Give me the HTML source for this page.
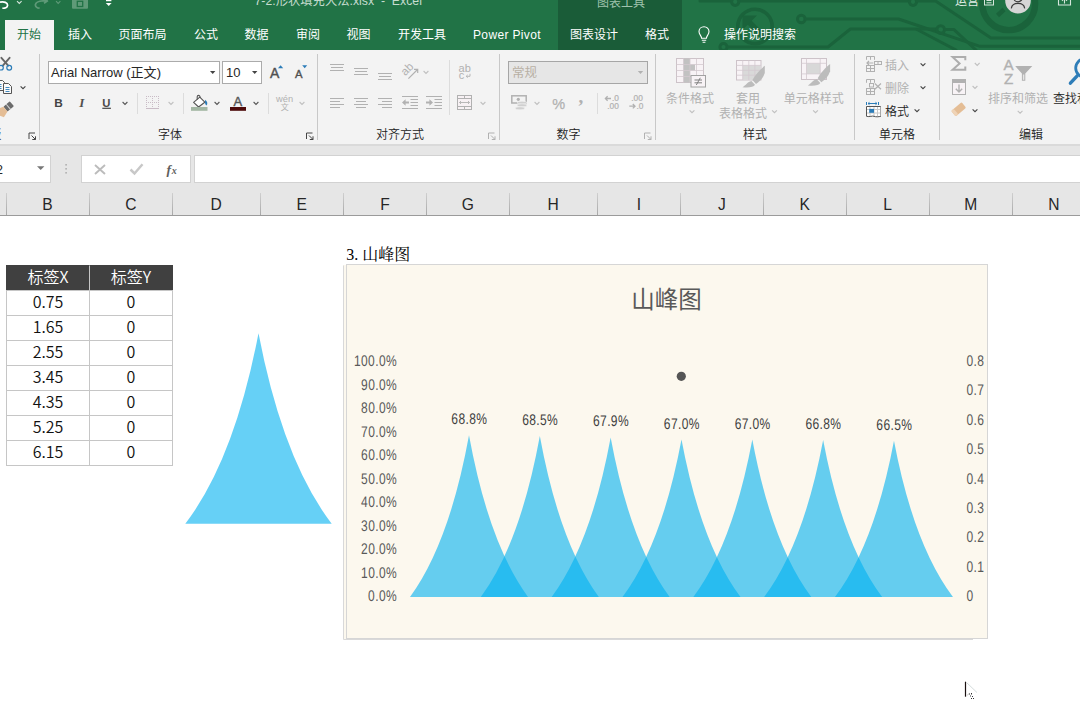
<!DOCTYPE html>
<html lang="zh-CN">
<head>
<meta charset="utf-8">
<title>7-2.形状填充大法.xlsx - Excel</title>
<style>
*{box-sizing:border-box;margin:0;padding:0}
html,body{width:1080px;height:720px;overflow:hidden;background:#fff}
body{font-family:"Liberation Sans","Noto Sans CJK SC",sans-serif;position:relative;color:#262626}
.abs{position:absolute}
/* ---------- title + tabs ---------- */
#titlebar{position:absolute;left:0;top:0;width:1080px;height:50px;background:#217346;overflow:hidden}
#ctxtab{position:absolute;left:558px;top:0;width:124px;height:50px;background:#1a5c38}
.tab{position:absolute;top:25.6px;height:18px;line-height:18px;font-size:12px;color:#fff;white-space:nowrap;letter-spacing:0}
#tab-home{position:absolute;left:5px;top:20px;width:49px;height:30px;background:#f3f3f3}
#tab-home span{position:absolute;left:-0.5px;width:49px;text-align:center;top:5.6px;line-height:18px;font-size:12px;color:#217346}
.ttl{position:absolute;top:-7.7px;font-size:12.3px;color:#c6dccf;white-space:nowrap;line-height:18px}
/* ---------- ribbon ---------- */
#ribbon{position:absolute;left:0;top:50px;width:1080px;height:94px;background:#f3f3f3}
#ribbon-b{position:absolute;left:0;top:144px;width:1080px;height:2px;background:#dadada}
#below{position:absolute;left:0;top:146px;width:1080px;height:70px;background:#e6e6e6}
.vsep{position:absolute;top:54px;width:1px;height:86px;background:#c6c6c6}
.ssep{position:absolute;width:1px;background:#d4d4d4}
.glabel{position:absolute;top:125px;font-size:12px;line-height:16px;color:#262626;white-space:nowrap;transform:translateX(-50%)}
.box{position:absolute;background:#fff;border:1px solid #ababab}
.rtxt{position:absolute;font-size:12px;line-height:16px;white-space:nowrap;color:#262626}
.dis{color:#b1b1b1}
/* ---------- formula bar ---------- */
.fbox{position:absolute;height:28px;background:#fff;border:1px solid #d2d2d2}
/* ---------- grid ---------- */
#colhdr{position:absolute;left:0;top:192px;width:1080px;height:24px;background:#e6e6e6;border-bottom:1px solid #9b9b9b}
.ch{position:absolute;top:3.5px;font-size:15.6px;line-height:18px;color:#262626;transform:translateX(-50%)}
.cs{position:absolute;top:1px;width:1px;height:22px;background:linear-gradient(#cfcfcf,#a8a8a8)}
#sheet{position:absolute;left:0;top:216px;width:1080px;height:504px;background:#fff}
/* ---------- table ---------- */
#tbl{position:absolute;left:6px;top:265px;width:167px;height:201px;border-collapse:collapse;font-size:14px}
.cell{position:absolute;height:26px;border:1px solid #c6c6c6;background:#fff;text-align:center;font-family:"Noto Sans CJK SC","Liberation Sans",sans-serif;font-size:16px;line-height:20px;color:#111;font-weight:350}
.cell.h{background:#404040;color:#fff;border-color:#404040;font-size:16px;line-height:20px}
.cell.h.second{border-left-color:#c6c6c6}
</style>
</head>
<body>
<div id="titlebar">
 <svg class="abs" style="left:0;top:0" width="1080" height="50" viewBox="0 0 1080 50">
  <!-- decorative circuit pattern -->
  <g fill="none" stroke="#1a633b" stroke-width="3" stroke-linecap="round" stroke-linejoin="round">
   <path d="M700 1 H731.5 M739 1 H909.5"/>
   <circle cx="735.2" cy="1.8" r="3.6"/>
   <circle cx="755" cy="26.4" r="17.2" stroke-width="3.6"/>
   <path d="M765 38 L746.5 19.5" stroke-width="5.5" stroke-linecap="butt"/>
   <path d="M742.5 15.5 H757 L742.5 30 Z" fill="#1a633b" stroke="none"/>
   <circle cx="801.3" cy="19" r="3.8"/>
   <path d="M805.3 19 H898.5 L980 46.3 H1080"/>
   <circle cx="723.5" cy="47" r="3.6"/>
   <path d="M727.3 47 H828 L850.4 29 H936.7"/>
   <circle cx="940.7" cy="29.6" r="3.8"/>
   <path d="M944.7 29.6 H954 L976 50"/>
   <path d="M917 29.5 L956 50"/>
   <circle cx="913" cy="1.8" r="3.6"/>
   <path d="M916.7 1 H935.6 L991 38 H1080"/>
   <circle cx="1008.7" cy="3.7" r="26.4" stroke-width="6.4"/>
   <path d="M1004 9.5 L997.5 15.5" stroke-width="4.5" stroke-linecap="butt"/>
  </g>
 </svg>
 <div id="ctxtab"></div>
 <!-- quick access toolbar (cropped) -->
 <svg class="abs" style="left:0;top:0" width="130" height="16" viewBox="0 0 130 16">
  <path d="M0 2.2 C4 1.2 7.6 2.6 7.6 5.2 C7.6 7.6 4.6 8.4 2.4 8.2" fill="none" stroke="#fff" stroke-width="1.7"/>
  <path d="M17 1.2 L19.3 3.4 L21.6 1.2" fill="none" stroke="#d8e6dd" stroke-width="1.1"/>
  <path d="M47.5 0.8 C42 0.6 36 1.2 35.4 4.6 C35.2 6.6 37 8 39.6 8.2 M44 3.2 L48 0.6" fill="none" stroke="#5f9a78" stroke-width="1.7"/>
  <path d="M56 1.2 L58.2 3.4 L60.4 1.2" fill="none" stroke="#5f9a78" stroke-width="1.1"/>
  <rect x="72" y="-2" width="16" height="10.8" rx="1" fill="#5f9a78"/>
  <rect x="77.3" y="1.3" width="5.4" height="5.2" fill="none" stroke="#217346" stroke-width="1.3"/>
  <rect x="106" y="-1" width="5.4" height="2.2" fill="#fff"/>
  <path d="M105.8 3 L111.6 3 L108.7 6 Z" fill="#fff"/>
 </svg>
 <div class="ttl" style="left:254.5px;letter-spacing:0">7-2.形状填充大法.xlsx&nbsp; -&nbsp; Excel</div>
 <div class="ttl" style="left:597px;color:#9fc3ad;font-size:12px;top:-6.5px">图表工具</div>
 <div class="ttl" style="left:955px;font-size:12px;top:-7.6px;color:#e2eee7">运营</div>
 <svg class="abs" style="left:980px;top:0" width="100" height="20" viewBox="980 0 100 20">
  <rect x="984.5" y="-3" width="9" height="8" fill="none" stroke="#d6e6dc" stroke-width="1"/>
  <path d="M986.5 0.5 H991.5 M986.5 2.8 H991.5" stroke="#d6e6dc" stroke-width="1"/>
  <circle cx="1018" cy=".8" r="12.8" fill="#d6d6d6"/>
  <circle cx="1018" cy="-2.6" r="4.4" fill="none" stroke="#3b3b3b" stroke-width="1.2"/>
  <path d="M1011.3 8.4 C1011.8 5 1014.5 3.4 1018 3.4 C1021.5 3.4 1024.2 5 1024.7 8.4" fill="none" stroke="#3b3b3b" stroke-width="1.2"/>
  <path d="M1058.5 -2 V5 H1070.5 V-2" fill="none" stroke="#d6e6dc" stroke-width="1.1"/>
  <path d="M1064.5 3.5 V-2 M1062 0.8 L1064.5 -1.7 L1067 0.8" fill="none" stroke="#d6e6dc" stroke-width="1.1"/>
 </svg>
 <div id="tab-home"><span>开始</span></div>
 <div class="tab" style="left:68px">插入</div>
 <div class="tab" style="left:118.5px">页面布局</div>
 <div class="tab" style="left:194px">公式</div>
 <div class="tab" style="left:244.5px">数据</div>
 <div class="tab" style="left:296px">审阅</div>
 <div class="tab" style="left:346.5px">视图</div>
 <div class="tab" style="left:398px">开发工具</div>
 <div class="tab" style="left:473px;letter-spacing:.35px">Power Pivot</div>
 <div class="tab" style="left:570px">图表设计</div>
 <div class="tab" style="left:645px">格式</div>
 <div class="tab" style="left:724px">操作说明搜索</div>
 <svg class="abs" style="left:696px;top:25px" width="16" height="20" viewBox="0 0 16 20">
  <path d="M5.6 13.2 C5.6 10.8 3 9.8 3 6.6 C3 3.8 5.2 1.8 8 1.8 C10.8 1.8 13 3.8 13 6.6 C13 9.8 10.4 10.8 10.4 13.2 Z" fill="none" stroke="#fff" stroke-width="1.1"/>
  <path d="M5.8 15.3 H10.2 M6.6 17.3 H9.4" stroke="#fff" stroke-width="1.1"/>
 </svg>
</div>
<div id="ribbon">
<svg class="abs" style="left:0;top:0" width="1080" height="94" viewBox="0 50 1080 94" font-family='"Liberation Sans","Noto Sans CJK SC",sans-serif'>
 <defs>
  <path id="chev" d="M-2.4 -1.2 L0 1.2 L2.4 -1.2" fill="none" stroke-width="1.1"/>
  <g id="launcher" fill="none" stroke-width="1">
   <path d="M0.5 6.5 V0.5 H6.5"/><path d="M3 3 L7 7 M7 3.8 V7 H3.8"/>
  </g>
 </defs>
 <!-- group separators -->
 <g fill="#c8c8c8">
  <rect x="39" y="54" width="1" height="86"/><rect x="317" y="54" width="1" height="86"/>
  <rect x="499" y="54" width="1" height="86"/><rect x="655" y="54" width="1" height="86"/>
  <rect x="854" y="54" width="1" height="86"/><rect x="939" y="54" width="1" height="86"/>
 </g>
 <g fill="#dcdcdc">
  <rect x="137" y="93" width="1" height="21"/><rect x="183" y="93" width="1" height="21"/>
  <rect x="268" y="93" width="1" height="21"/><rect x="449" y="60" width="1" height="55"/>
  <rect x="597" y="93" width="1" height="21"/>
 </g>
 <!-- group labels -->
 <g font-size="12" fill="#222" text-anchor="middle" font-weight="350">
  <text x="170" y="138.7">字体</text><text x="400" y="138.7">对齐方式</text><text x="568.5" y="138.7">数字</text>
  <text x="755" y="138.7">样式</text><text x="897" y="138.7">单元格</text><text x="1031" y="138.7">编辑</text>
  <text x="1.6" y="138.7" text-anchor="end">剪贴板</text>
 </g>
 <!-- dialog launchers -->
 <use href="#launcher" x="28.5" y="132.5" stroke="#444"/>
 <use href="#launcher" x="306" y="132.5" stroke="#444"/>
 <use href="#launcher" x="488" y="132.5" stroke="#b1b1b1"/>
 <use href="#launcher" x="644" y="132.5" stroke="#b1b1b1"/>

 <!-- ===== clipboard (cropped) ===== -->
 <g fill="none" stroke-linecap="round">
  <path d="M1.4 57.8 L8.2 65.6 M9.6 57.8 L2.8 65.6" stroke="#666" stroke-width="1.9"/>
  <circle cx="1" cy="67.7" r="2.3" stroke="#2b7cb8" stroke-width="1.2"/>
  <circle cx="9.2" cy="67.7" r="2.4" stroke="#2b7cb8" stroke-width="1.2"/>
 </g>
 <g fill="#fafafa" stroke="#555" stroke-width="1">
  <path d="M-3.5 80.5 H2.5 L4.5 82.5 V90.5 H-3.5 Z"/>
  <path d="M3.5 83.5 H8.5 L11.5 86.5 V93.5 H3.5 Z"/>
  <path d="M5.5 87.5 H9.5 M5.5 89.5 H9.5 M5.5 91.5 H9.5" stroke="#2b7cb8" stroke-width=".9"/>
  <path d="M-3 84.5 H1.5 M-3 86.5 H1.5 M-3 88.5 H1.5" stroke="#2b7cb8" stroke-width=".9"/>
 </g>
 <use href="#chev" x="23" y="87.5" stroke="#444"/>
 <g transform="translate(8.2 106.8) rotate(-40)">
  <rect x="-3.6" y="-3.2" width="8.4" height="6.4" rx=".8" fill="#6b6b6b"/>
  <rect x="-.4" y="-3.2" width="1" height="6.4" fill="#d8d8d8"/>
  <path d="M-3.6 -3.2 L-8 -4.6 L-13.5 -1 L-10 5.2 L-3.6 3.2 Z" fill="#e4bd95"/>
 </g>
 <!-- ===== font group ===== -->
 <rect x="48.5" y="61.5" width="171" height="22" fill="#fff" stroke="#ababab"/>
 <rect x="222.5" y="61.5" width="39" height="22" fill="#fff" stroke="#ababab"/>
 <text x="51" y="77" font-size="13" fill="#262626" textLength="110" lengthAdjust="spacingAndGlyphs">Arial Narrow (正文)</text>
 <text x="226" y="77" font-size="13" fill="#262626">10</text>
 <path d="M210 71 H215.4 L212.7 74 Z" fill="#444"/>
 <path d="M252 71 H257.4 L254.7 74 Z" fill="#444"/>
 <text x="270" y="77.8" font-size="14" fill="#505050" stroke="#505050" stroke-width=".4">A</text>
 <path d="M278 68.2 L280.6 65.2 L283.2 68.2 Z" fill="#2b7cb8"/>
 <text x="295" y="77.8" font-size="11.3" fill="#505050" stroke="#505050" stroke-width=".35">A</text>
 <path d="M302.2 65.2 H307.2 L304.7 68.2 Z" fill="#2b7cb8"/>
 <text x="54.3" y="106.8" font-size="11.8" font-weight="bold" fill="#444">B</text>
 <text x="79.3" y="106.8" font-size="13" font-style="italic" font-weight="bold" font-family='"Liberation Serif",serif' fill="#505050">I</text>
 <text x="102.3" y="106.5" font-size="11.3" font-weight="bold" fill="#4a4a4a">U</text>
 <rect x="102.3" y="107.7" width="8.6" height="1.2" fill="#444"/>
 <use href="#chev" x="125" y="103.2" stroke="#555"/>
 <!-- borders (disabled) -->
 <g stroke="#c9bcc6" stroke-width="1" stroke-dasharray="1 1" fill="none">
  <path d="M146 96.5 H159 M146 102.5 H159"/>
  <path d="M146.5 96 V108 M152.5 96 V108 M158.5 96 V108"/>
 </g>
 <path d="M146 108.5 H159" stroke="#c9bcc6" stroke-width="1"/>
 <use href="#chev" x="171" y="103.2" stroke="#c0c0c0"/>
 <!-- fill colour -->
 <g fill="none" stroke="#555" stroke-width="1.1" stroke-linejoin="round">
  <path d="M193.6 102.3 L199.8 97.2 L204.8 102.2 L198.6 107 Z" fill="#fff"/>
  <path d="M197.2 99.6 V96.8 a1.4 1.4 0 0 1 2.8 0 V98"/>
 </g>
 <path d="M205.3 99.8 C207.5 101.6 207.9 104 206.5 105.4 C204.9 104.6 204.7 102.2 205.3 99.8 Z" fill="#2b7cb8"/>
 <rect x="191" y="107" width="16.5" height="3.8" fill="#a3b7a4"/>
 <use href="#chev" x="217" y="103.2" stroke="#555"/>
 <!-- font colour -->
 <text x="233.6" y="106.2" font-size="13" fill="#555" stroke="#555" stroke-width=".4">A</text>
 <rect x="230" y="107" width="16" height="3.8" fill="#4d0a0a"/>
 <use href="#chev" x="256" y="103.2" stroke="#555"/>
 <!-- wen -->
 <text x="284.6" y="101.7" font-size="9.3" fill="#b1b1b1" text-anchor="middle">wén</text>
 <text x="284.8" y="110.3" font-size="8" fill="#b1b1b1" text-anchor="middle">文</text>
 <use href="#chev" x="302" y="103.2" stroke="#c0c0c0"/>
 <!-- ===== alignment group (disabled) ===== -->
 <g stroke="#b1b1b1" stroke-width="1" fill="none">
  <path d="M330 64.5 H344 M331 67.5 H343 M330 70.5 H344"/>
  <path d="M354 68.5 H368 M355 71.5 H367 M354 74.5 H368"/>
  <path d="M378 73.5 H392 M379 76.5 H391 M378 79.5 H392"/>
  <path d="M330 98.5 H344 M330 101.5 H340 M330 104.5 H344 M330 107.5 H340"/>
  <path d="M354 98.5 H368 M356 101.5 H366 M354 104.5 H368 M356 107.5 H366"/>
  <path d="M378 98.5 H392 M382 101.5 H392 M378 104.5 H392 M382 107.5 H392"/>
  <!-- decrease indent -->
  <path d="M402 96.5 H418 M410.5 99.5 H418 M410.5 102.5 H418 M410.5 105.5 H418 M402 108.5 H418"/>
  <!-- increase indent -->
  <path d="M426 96.5 H442 M434.5 99.5 H442 M434.5 102.5 H442 M434.5 105.5 H442 M426 108.5 H442"/>
  <!-- orientation arrow -->
  <path d="M408.4 78.6 L417.3 69.8 M414 69.4 H417.7 V73.1" stroke-width="1.2"/>
  <!-- merge -->
  <rect x="457.5" y="95.5" width="14" height="14" fill="#f7f1f4"/>
  <path d="M457.5 98.5 H471.5 M457.5 106.5 H471.5 M464.5 95.5 V98.5 M464.5 106.5 V109.5"/>
  <path d="M459.5 102.5 H469.5 M461 101 L459.5 102.5 L461 104 M468 101 L469.5 102.5 L468 104" stroke-width=".9"/>
  <!-- wrap arrow -->
  <path d="M470 73.8 V76.3 H466.3 M467.7 74.9 L466.2 76.3 L467.7 77.7" stroke-width=".9"/>
 </g>
 <path d="M402 102.5 L405.6 99.3 V101.4 H409 V103.6 H405.6 V105.7 Z" fill="#b1b1b1"/>
 <path d="M433 102.5 L429.4 99.3 V101.4 H426 V103.6 H429.4 V105.7 Z" fill="#b1b1b1"/>
 <text x="0" y="0" font-size="11.5" fill="#b1b1b1" transform="translate(405.3 76.3) rotate(-45)">ab</text>
 <text x="458.6" y="71.8" font-size="11" fill="#b1b1b1">ab</text>
 <text x="458.8" y="79" font-size="11" fill="#b1b1b1">c</text>
 <use href="#chev" x="426" y="72.2" stroke="#c0c0c0"/>
 <use href="#chev" x="483" y="103.2" stroke="#c0c0c0"/>

 <!-- ===== number group (disabled) ===== -->
 <rect x="508.5" y="61.5" width="139" height="22" fill="#e6e6e6" stroke="#a6a6a6"/>
 <text x="512" y="77" font-size="12.5" fill="#b8b0a4">常规</text>
 <path d="M637.8 71 H643.2 L640.5 74 Z" fill="#b1b1b1"/>
 <g stroke="#b1b1b1" fill="none" stroke-width="1.5">
  <rect x="511.8" y="95.8" width="14.4" height="7.2"/>
  <circle cx="518.3" cy="99.3" r="1.6" fill="#b1b1b1" stroke="none"/>
 </g>
 <g fill="#d0d0d0" stroke="#f3f3f3" stroke-width=".6"><ellipse cx="522" cy="102.7" rx="5" ry="1.5"/><ellipse cx="522" cy="105.3" rx="5" ry="1.5"/><ellipse cx="520" cy="108.3" rx="4.6" ry="1.5"/></g>
 <use href="#chev" x="537" y="103.2" stroke="#c0c0c0"/>
 <text x="552.3" y="108.6" font-size="14.5" fill="#b1b1b1" stroke="#b1b1b1" stroke-width=".25">%</text>
 <text x="578.5" y="103.2" font-size="19" font-weight="bold" fill="#b1b1b1" font-family='"Liberation Serif",serif'>,</text>
 <g font-size="8.3" fill="#b1b1b1" stroke="#b1b1b1" stroke-width=".2">
  <text x="612" y="101.3">.0</text><text x="607.3" y="108.8">.00</text>
  <text x="631.3" y="101.3">.00</text><text x="636.5" y="108.8">.0</text>
 </g>
 <g stroke="#b1b1b1" fill="none" stroke-width="1.3">
  <path d="M611 98.5 H605.4 M607.6 96.3 L605.4 98.5 L607.6 100.7"/>
  <path d="M629.3 106.2 H635 M632.8 104 L635 106.2 L632.8 108.4"/>
 </g>

 <!-- ===== styles group (disabled) ===== -->
 <!-- conditional formatting -->
 <g>
  <rect x="676.5" y="58.5" width="27" height="24" fill="#f8f3f6" stroke="#cdc3c9"/>
  <path d="M683.5 58.5 H690 V64.5 H695 V70.5 H690 V82.5 H683.5 Z" fill="#c2c2c2"/>
  <path d="M676.5 64.5 H703.5 M676.5 70.5 H703.5 M676.5 76.5 H703.5 M683.5 58.5 V82.5 M690 58.5 V82.5 M696.5 58.5 V82.5" stroke="#d3c9cf" fill="none" stroke-width=".8"/>
  <rect x="691" y="75.5" width="14.5" height="11.5" fill="#f8f3f6" stroke="#a2a2a2"/>
  <path d="M694.5 80 H702 M694.5 82.8 H702 M700.3 77.8 L696.3 85" stroke="#808080" fill="none" stroke-width="1"/>
 </g>
 <!-- format as table -->
 <g>
  <rect x="736.5" y="60.5" width="24.5" height="19.5" fill="#f8f3f6" stroke="#cdc3c9"/>
  <rect x="742.7" y="65.4" width="18" height="14.4" fill="#d9d9d9"/>
  <path d="M736.5 65.4 H761 M736.5 70.3 H761 M736.5 75.2 H761 M742.7 60.5 V80 M748.8 60.5 V80 M754.9 60.5 V80" stroke="#d3c9cf" fill="none" stroke-width=".8"/>
  <g transform="translate(743 65.8)" fill="#bcbcbc">
   <path d="M21.8 0 L21.8 7.2 C20 12.5 16.5 16 13 18.2 L9.4 14.2 C12 9.5 17 3.5 21.8 0 Z"/>
   <path d="M8.4 15.2 L12 19 C10.8 21.3 6 22.3 -0.5 21.5 C2.8 19.5 4.5 16 8.4 15.2 Z"/>
  </g>
 </g>
 <!-- cell styles -->
 <g>
  <rect x="801.5" y="58.5" width="25" height="21" fill="#f8f3f6" stroke="#cdc3c9"/>
  <rect x="806.5" y="63.3" width="13.7" height="10.6" fill="#d8d8d8"/>
  <path d="M801.5 63.3 H826.5 M801.5 73.9 H826.5 M806.5 58.5 V79.5 M820.2 58.5 V79.5" stroke="#d3c9cf" fill="none" stroke-width=".8"/>
  <g transform="translate(808.3 64)" fill="#bcbcbc">
   <path d="M21.8 0 L21.8 7.2 C20 12.5 16.5 16 13 18.2 L9.4 14.2 C12 9.5 17 3.5 21.8 0 Z"/>
   <path d="M8.4 15.2 L12 19 C10.8 21.3 6 22.3 -0.5 21.5 C2.8 19.5 4.5 16 8.4 15.2 Z"/>
  </g>
 </g>
 <g font-size="12" fill="#b1b1b1" text-anchor="middle">
  <text x="690" y="102.6">条件格式</text>
  <text x="748" y="102.6">套用</text>
  <text x="743" y="117.6">表格格式</text>
  <text x="813.7" y="102.6">单元格样式</text>
 </g>
 <use href="#chev" x="692" y="111.5" stroke="#c0c0c0"/>
 <use href="#chev" x="774.5" y="111.5" stroke="#c0c0c0"/>
 <use href="#chev" x="815.5" y="111.5" stroke="#c0c0c0"/>
 <!-- ===== cells group ===== -->
 <g stroke="#b1b1b1" fill="none" stroke-width="1">
  <!-- insert -->
  <path d="M866.5 59.8 V56.5 H874.5 V59.8 M870.5 56.5 V59.8"/>
  <rect x="874.5" y="61.5" width="7" height="3"/><path d="M878 61.5 V64.5"/>
  <path d="M873.3 63 H867 M869 61 L867 63 L869 65" stroke-width="1.2"/>
  <rect x="866.5" y="65.5" width="8" height="6"/><path d="M866.5 68.5 H874.5 M870.5 65.5 V71.5"/>
  <!-- delete -->
  <path d="M866.5 82.8 V79.5 H874.5 V82.8 M870.5 79.5 V82.8"/>
  <rect x="869.5" y="83.5" width="4" height="3.5"/>
  <path d="M874.8 83.5 L881 89.3 M881 83.5 L874.8 89.3" stroke-width="1.2"/>
  <rect x="866.5" y="88.5" width="8" height="6"/><path d="M866.5 91.5 H874.5 M870.5 88.5 V94.5"/>
 </g>
 <!-- format -->
 <rect x="866.5" y="106" width="14" height="10.5" fill="#fff"/>
 <path d="M866.5 109.5 H880.5 M866.5 113 H880.5 M870 106 V116.5 M874 106 V116.5 M877.5 106 V116.5" stroke="#c8c8c8" fill="none" stroke-width="1"/>
 <path d="M881 106.5 H866.5 V116.3 C870 117.3 872 115.5 874 116.3 C876 117.1 878.5 116.8 881 116.3" stroke="#555" fill="none" stroke-width="1"/><path d="M880.5 106.5 V116.3" stroke="#a8a8a8" fill="none"/>
 <rect x="869.2" y="108.9" width="4.8" height="3.9" fill="#2b7cb8"/>
 <path d="M866.5 102 V105 M878.5 102 V105 M868 103.5 H877 M869.5 102.3 L868 103.5 L869.5 104.7 M875.5 102.3 L877 103.5 L875.5 104.7" stroke="#2b7cb8" fill="none" stroke-width="1"/>
 <g font-size="12">
  <text x="885" y="69.5" fill="#b1b1b1">插入</text>
  <text x="885" y="92.5" fill="#b1b1b1">删除</text>
  <text x="885" y="115.5" fill="#222" font-weight="350">格式</text>
 </g>
 <use href="#chev" x="923" y="64.5" stroke="#444"/>
 <use href="#chev" x="923" y="87.5" stroke="#444"/>
 <use href="#chev" x="917" y="110.5" stroke="#444"/>

 <!-- ===== editing group ===== -->
 <path d="M965.3 60.2 V57 H952.6 L959.6 63.5 L952.6 69.8 H965.3 V66.6" fill="none" stroke="#adadad" stroke-width="2" stroke-linejoin="miter"/>
 <use href="#chev" x="977.2" y="64.2" stroke="#c0c0c0"/>
 <g stroke="#b1b1b1" fill="none">
  <rect x="952.5" y="79.5" width="13" height="15" stroke-width="1" fill="#f8f3f6"/>
  <rect x="952.5" y="79.5" width="13" height="3" fill="#b1b1b1"/>
  <path d="M959 84.5 V91.8 M955.8 88.7 L959 91.9 L962.2 88.7" stroke-width="1.4"/>
 </g>
 <use href="#chev" x="975" y="87.2" stroke="#c0c0c0"/>
 <g transform="translate(958.6 109.3) rotate(-40)">
  <rect x="-6.8" y="-3.6" width="13.6" height="7.2" rx="1.2" fill="#e4bd95"/>
  <rect x="-6.8" y="-3.6" width="3.4" height="7.2" rx="1.2" fill="#efd3b6"/>
 </g>
 <use href="#chev" x="975" y="110.5" stroke="#444"/>
 <!-- sort & filter -->
 <g font-size="15.2" fill="#b1b1b1" stroke="#b1b1b1" stroke-width=".35">
  <text x="1003.4" y="70">A</text><text x="1004" y="84.4">Z</text>
 </g>
 <path d="M1015.2 66 H1032.3 L1025.3 73.6 V80.8 H1021.9 V73.6 Z" fill="#b1b1b1"/>
 <rect x="1022.9" y="74.5" width="1.4" height="5.3" fill="#e6e6e6"/>
 <text x="1018" y="102.6" font-size="12" fill="#b1b1b1" text-anchor="middle">排序和筛选</text>
 <use href="#chev" x="1020.1" y="112" stroke="#c0c0c0"/>
 <!-- find & select (cropped) -->
 <circle cx="1085" cy="68" r="9.3" fill="none" stroke="#2e7db8" stroke-width="2.8"/>
 <path d="M1077.2 75.8 L1070.4 83.2" stroke="#2e7db8" stroke-width="3.4" stroke-linecap="round"/>
 <text x="1053" y="102.6" font-size="12" fill="#222" font-weight="350">查找和选择</text>
</svg>
</div>

<div id="ribbon-b"></div>
<div id="below">
 <div class="fbox" style="left:-20px;width:71px;top:9px"></div>
 <div class="fbox" style="left:81px;width:110px;top:9px"></div>
 <div class="fbox" style="left:194px;width:900px;top:9px"></div>
 <div class="abs" style="left:-60px;width:63px;top:14.5px;text-align:right;font-size:12.5px;line-height:18px;color:#262626;white-space:nowrap">图表 2</div>
 <svg class="abs" style="left:0;top:9px" width="200" height="28" viewBox="0 155 200 28">
  <path d="M37 166.3 H44.4 L40.7 170 Z" fill="#777"/>
  <g fill="#b0b0b0"><rect x="65.3" y="164" width="1.6" height="1.6"/><rect x="65.3" y="168" width="1.6" height="1.6"/><rect x="65.3" y="172" width="1.6" height="1.6"/></g>
  <path d="M95 165 L105 174 M105 165 L95 174" stroke="#bcbcbc" stroke-width="1.9" fill="none"/>
  <path d="M130.5 169.5 L134.5 173.5 L142.5 164.3" stroke="#c8c8c8" stroke-width="2.5" fill="none"/>
  <text x="166.5" y="173.5" font-size="13.5" font-style="italic" font-weight="bold" fill="#5e5e5e" font-family='"Liberation Serif",serif'>f</text>
  <text x="171.8" y="173.5" font-size="10" font-style="italic" font-weight="bold" fill="#5e5e5e" font-family='"Liberation Serif",serif'>x</text>
 </svg>
</div>
<div id="colhdr">
<div class="cs" style="left:6px"></div>
 <div class="ch" style="left:47.5px">B</div><div class="cs" style="left:89px"></div>
 <div class="ch" style="left:130.8px">C</div><div class="cs" style="left:172px"></div>
 <div class="ch" style="left:216.2px">D</div><div class="cs" style="left:260px"></div>
 <div class="ch" style="left:301.8px">E</div><div class="cs" style="left:343px"></div>
 <div class="ch" style="left:385.0px">F</div><div class="cs" style="left:426px"></div>
 <div class="ch" style="left:467.8px">G</div><div class="cs" style="left:509px"></div>
 <div class="ch" style="left:553.2px">H</div><div class="cs" style="left:597px"></div>
 <div class="ch" style="left:639.0px">I</div><div class="cs" style="left:680px"></div>
 <div class="ch" style="left:722.0px">J</div><div class="cs" style="left:763px"></div>
 <div class="ch" style="left:804.8px">K</div><div class="cs" style="left:846px"></div>
 <div class="ch" style="left:887.5px">L</div><div class="cs" style="left:929px"></div>
 <div class="ch" style="left:970.8px">M</div><div class="cs" style="left:1012px"></div>
 <div class="ch" style="left:1053.8px">N</div><div class="cs" style="left:1095px"></div>
</div>
<div id="sheet">
 <div class="cell h" style="left:6px;top:49px;width:84px;height:26px">标签X</div><div class="cell h second" style="left:89px;top:49px;width:84px;height:26px">标签Y</div>
 <div class="cell" style="left:6px;top:74px;width:84px;height:26px">0.75</div><div class="cell" style="left:89px;top:74px;width:84px;height:26px">0</div>
 <div class="cell" style="left:6px;top:99px;width:84px;height:26px">1.65</div><div class="cell" style="left:89px;top:99px;width:84px;height:26px">0</div>
 <div class="cell" style="left:6px;top:124px;width:84px;height:26px">2.55</div><div class="cell" style="left:89px;top:124px;width:84px;height:26px">0</div>
 <div class="cell" style="left:6px;top:149px;width:84px;height:26px">3.45</div><div class="cell" style="left:89px;top:149px;width:84px;height:26px">0</div>
 <div class="cell" style="left:6px;top:174px;width:84px;height:26px">4.35</div><div class="cell" style="left:89px;top:174px;width:84px;height:26px">0</div>
 <div class="cell" style="left:6px;top:199px;width:84px;height:26px">5.25</div><div class="cell" style="left:89px;top:199px;width:84px;height:26px">0</div>
 <div class="cell" style="left:6px;top:224px;width:84px;height:26px">6.15</div><div class="cell" style="left:89px;top:224px;width:84px;height:26px">0</div>
 <div class="abs" id="lbl" style="left:346.3px;top:29.6px;font-size:16px;line-height:18px;color:#000;white-space:nowrap;font-family:'Liberation Serif','Noto Serif CJK SC',serif"><span style="display:inline-block;width:8px">3</span><span style="display:inline-block;width:8px">.</span>山峰图</div>
 <svg class="abs" style="left:0;top:0" width="1080" height="504" viewBox="0 216 1080 504" font-family='"Liberation Sans","Noto Sans CJK SC",sans-serif'>
  <path d="M258.50 333.30 Q234.10 460.23 185.30 523.70 L331.70 523.70 Q282.90 460.23 258.50 333.30 Z" fill="#00b0f0" fill-opacity=".6"/>
  <rect x="343" y="265" width="644.5" height="374" fill="#fcf8ee"/>
  <path d="M343.5 265.5 V639.5 H973" stroke="#d9d9d9" stroke-width="1" fill="none"/>
  <rect x="346.5" y="264.5" width="641" height="374" fill="#fcf8ee" stroke="#d6d6d6" stroke-width="1"/>
  <text x="666.6" y="308.2" font-size="23.5" fill="#595959" text-anchor="middle">山峰图</text>
  <circle cx="681.3" cy="376.3" r="4.6" fill="#555"/>
  <g fill="#00b0f0" fill-opacity=".6">
   <path d="M469.00 435.32 Q449.33 543.11 410.00 597.00 L528.00 597.00 Q488.67 543.11 469.00 435.32 Z"/>
   <path d="M539.83 436.02 Q520.16 543.34 480.83 597.00 L598.83 597.00 Q559.50 543.34 539.83 436.02 Z"/>
   <path d="M610.66 437.43 Q590.99 543.81 551.66 597.00 L669.66 597.00 Q630.33 543.81 610.66 437.43 Z"/>
   <path d="M681.49 439.55 Q661.82 544.52 622.49 597.00 L740.49 597.00 Q701.16 544.52 681.49 439.55 Z"/>
   <path d="M752.32 439.55 Q732.65 544.52 693.32 597.00 L811.32 597.00 Q771.99 544.52 752.32 439.55 Z"/>
   <path d="M823.15 440.02 Q803.48 544.67 764.15 597.00 L882.15 597.00 Q842.82 544.67 823.15 440.02 Z"/>
   <path d="M893.98 440.73 Q874.31 544.91 834.98 597.00 L952.98 597.00 Q913.65 544.91 893.98 440.73 Z"/>
  </g>
  <g font-size="14.67" fill="#404040" text-anchor="middle" letter-spacing=".45" text-rendering="geometricPrecision">
   <text transform="translate(469.3 424.3) scale(.82 1.05)">68.8%</text>
   <text transform="translate(540.1 425.0) scale(.82 1.05)">68.5%</text>
   <text transform="translate(611.0 426.4) scale(.82 1.05)">67.9%</text>
   <text transform="translate(681.8 428.6) scale(.82 1.05)">67.0%</text>
   <text transform="translate(752.6 428.6) scale(.82 1.05)">67.0%</text>
   <text transform="translate(823.4 429.0) scale(.82 1.05)">66.8%</text>
   <text transform="translate(894.3 429.7) scale(.82 1.05)">66.5%</text>
  </g>
  <g font-size="14.67" fill="#595959" text-anchor="end" letter-spacing=".45" text-rendering="geometricPrecision">
   <text transform="translate(397 601.0) scale(.82 1.05)">0.0%</text>
   <text transform="translate(397 577.5) scale(.82 1.05)">10.0%</text>
   <text transform="translate(397 554.0) scale(.82 1.05)">20.0%</text>
   <text transform="translate(397 530.5) scale(.82 1.05)">30.0%</text>
   <text transform="translate(397 507.0) scale(.82 1.05)">40.0%</text>
   <text transform="translate(397 483.5) scale(.82 1.05)">50.0%</text>
   <text transform="translate(397 460.0) scale(.82 1.05)">60.0%</text>
   <text transform="translate(397 436.5) scale(.82 1.05)">70.0%</text>
   <text transform="translate(397 413.0) scale(.82 1.05)">80.0%</text>
   <text transform="translate(397 389.5) scale(.82 1.05)">90.0%</text>
   <text transform="translate(397 366.0) scale(.82 1.05)">100.0%</text>
  </g>
  <g font-size="14.67" fill="#595959" letter-spacing=".45" text-rendering="geometricPrecision">
   <text transform="translate(966.5 601.0) scale(.82 1.05)">0</text>
   <text transform="translate(966.5 571.6) scale(.82 1.05)">0.1</text>
   <text transform="translate(966.5 542.2) scale(.82 1.05)">0.2</text>
   <text transform="translate(966.5 512.9) scale(.82 1.05)">0.3</text>
   <text transform="translate(966.5 483.5) scale(.82 1.05)">0.4</text>
   <text transform="translate(966.5 454.1) scale(.82 1.05)">0.5</text>
   <text transform="translate(966.5 424.8) scale(.82 1.05)">0.6</text>
   <text transform="translate(966.5 395.4) scale(.82 1.05)">0.7</text>
   <text transform="translate(966.5 366.0) scale(.82 1.05)">0.8</text>
  </g>
  <g fill="none"><path d="M965.5 681.7 V696.7" stroke="#1a1010" stroke-width="1.2"/><path d="M966.5 682.5 L977 692.5" stroke="#c9d3d3" stroke-width=".8"/><path d="M966.8 695.5 L969.3 693.5" stroke="#bbb" stroke-width=".8"/><g fill="#333"><rect x="969" y="693.5" width="1" height="1"/><rect x="971" y="693" width="1" height="1.5"/><rect x="970" y="695.5" width="1" height="1"/><rect x="972" y="696" width="1" height="1" fill="#334"/><rect x="971" y="698" width="1" height="1"/><rect x="973" y="698" width="1" height="1"/></g></g>
 </svg>
</div>
</body>
</html>
